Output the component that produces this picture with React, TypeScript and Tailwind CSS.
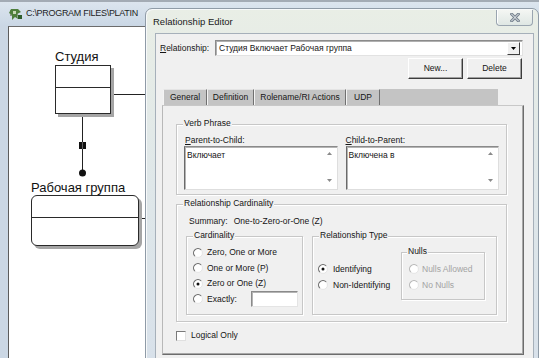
import React from "react";

function Radio({ checked = false, disabled = false }: { checked?: boolean; disabled?: boolean }) {
  return (
    <svg width="10" height="10" viewBox="0 0 12 12" className="shrink-0">
      <circle cx="6" cy="6" r="5.3" fill="#ffffff" />
      <path d="M2.25 9.75 A5.3 5.3 0 0 1 9.75 2.25" fill="none" stroke={disabled ? "#b9b9b9" : "#6f6f6f"} strokeWidth="1.4" />
      <path d="M9.75 2.25 A5.3 5.3 0 0 1 2.25 9.75" fill="none" stroke="#e2e2e2" strokeWidth="1" />
      {checked && <circle cx="6" cy="6" r="1.8" fill="#111111" />}
    </svg>
  );
}

function Group({
  label,
  className,
  labelClass,
  children,
}: {
  label: string;
  className: string;
  labelClass?: string;
  children?: React.ReactNode;
}) {
  return (
    <div className={`relative border border-[#c7c7c7] shadow-[inset_1px_1px_0_#ffffff,1px_1px_0_#ffffff] ${className}`}>
      <span className={`absolute -top-[7px] px-[1px] bg-[#f0f0f0] leading-[11px] whitespace-nowrap ${labelClass ?? "left-[6px]"}`}>
        {label}
      </span>
      {children}
    </div>
  );
}

function UpArrow() {
  return (
    <svg width="5" height="3" viewBox="0 0 5 3">
      <path d="M0 3 L2.5 0 L5 3 Z" fill="#8a8a8a" />
    </svg>
  );
}
function DownArrow() {
  return (
    <svg width="5" height="3" viewBox="0 0 5 3">
      <path d="M0 0 L2.5 3 L5 0 Z" fill="#8a8a8a" />
    </svg>
  );
}

function TextArea({ text }: { text: string }) {
  return (
    <div className="h-[44px] flex bg-white border border-t-[#8a8a8a] border-l-[#6a6a6a] border-r-[#dedede] border-b-[#dedede] shadow-[inset_1px_1px_0_#b4b4b4]">
      <div className="flex-1 pl-[2px] pt-[3px] whitespace-nowrap">{text}</div>
      <div className="w-[13px] flex flex-col items-center justify-between pt-[5px] pb-[7px] mr-[1px]">
        <UpArrow />
        <DownArrow />
      </div>
    </div>
  );
}

function Tab({ w, children }: { w: string; children: React.ReactNode }) {
  return (
    <div className={`${w} h-full flex items-center justify-center border-l border-t border-l-[#f4f4f4] border-t-[#e4e4e4] border-r border-r-[#707070] whitespace-nowrap`}>
      {children}
    </div>
  );
}

function Button({ children }: { children: React.ReactNode }) {
  return (
    <div className="w-[55px] h-[21px] flex items-center justify-center bg-[#f0f0f0] border border-t-[#ffffff] border-l-[#ffffff] border-r-[#3c3c3c] border-b-[#3c3c3c] shadow-[inset_-1px_-1px_0_#a0a0a0]">
      {children}
    </div>
  );
}

function AppIcon() {
  return (
    <svg width="14" height="13" viewBox="0 0 14 13" className="shrink-0">
      <rect x="1" y="2" width="8" height="6" fill="#8c9a8c" />
      <path d="M2 1 L9 1 L12 4 L8 6 L9 11 L6 9 L3 12 L3 7 L0 5 Z" fill="#4f7f3c" />
      <rect x="4" y="3" width="3" height="3" fill="#c8d8b8" />
      <rect x="9" y="7" width="4" height="4" fill="#2f5d2a" />
    </svg>
  );
}

function CloseButton() {
  return (
    <div className="ml-auto mr-[5px] mt-[1px] w-[37px] h-[16px] flex items-center justify-center rounded-b-[4px] border border-t-0 border-[#9aa5b0] bg-gradient-to-b from-[#f4f6f3] to-[#dfe7e4] shadow-[inset_1px_0_0_#ffffff]">
      <svg width="10" height="9" viewBox="0 0 10 9">
        <path d="M1.5 1 L8.5 8 M8.5 1 L1.5 8" stroke="#76828e" strokeWidth="3" strokeLinecap="square" />
        <path d="M1.5 1 L8.5 8 M8.5 1 L1.5 8" stroke="#eef1f3" strokeWidth="1" strokeLinecap="square" />
      </svg>
    </div>
  );
}

export default function App() {
  return (
    <div className="relative w-[539px] h-[358px] overflow-hidden bg-[#cbd7e4] font-['Liberation_Sans',Arial,sans-serif] text-[#151515]">
      {/* background ERwin window */}
      <div className="absolute inset-0 flex flex-col border-t-2 border-[#a3abb4]">
        <div className="h-[24px] flex items-center pl-[9px] gap-[3px] bg-gradient-to-b from-[#dce5ee] to-[#cad7e5]">
          <AppIcon />
          <span className="text-[9px] tracking-[-0.3px] text-[#1e1e1e] whitespace-nowrap">
            C:\PROGRAM FILES\PLATIN
          </span>
        </div>
        <div className="flex-1 flex pl-[8px]">
          <div className="relative w-[139px] bg-white border-l border-t border-r border-l-[#5c5c5c] border-t-[#6c6c6c] border-r-[#9a9a9a]">
            <svg className="absolute inset-0" width="137" height="331">
              <line x1="101" y1="67.5" x2="140" y2="67.5" stroke="#222" strokeWidth="1" />
              <line x1="73.5" y1="86" x2="73.5" y2="146" stroke="#222" strokeWidth="1" />
              <rect x="70" y="115" width="7" height="7" fill="#111" />
              <line x1="73.5" y1="115" x2="73.5" y2="122" stroke="#777" strokeWidth="0.8" />
              <circle cx="73.5" cy="146" r="3.5" fill="#111" />
              <line x1="130" y1="191.5" x2="140" y2="191.5" stroke="#222" strokeWidth="1" />
            </svg>
            <div className="absolute left-[46px] top-[22px] text-[13px] leading-[15px] text-[#111]">Студия</div>
            <div className="absolute left-[46px] top-[38px] w-[56px] h-[49px] flex flex-col border border-[#2a2a2a] bg-white shadow-[3px_3px_0_#a5a5a5]">
              <div className="h-[22px] border-b border-[#2a2a2a]" />
            </div>
            <div className="absolute left-[22px] top-[153px] text-[13px] leading-[15px] text-[#111] whitespace-nowrap">Рабочая группа</div>
            <div className="absolute left-[22px] top-[168px] w-[108px] h-[51px] flex flex-col rounded-[6px] border border-[#2a2a2a] bg-white shadow-[3px_3px_0_#a5a5a5]">
              <div className="h-[22px] border-b border-[#2a2a2a]" />
            </div>
          </div>
        </div>
      </div>

      {/* Relationship Editor dialog */}
      <div className="absolute left-[145px] top-[8px] w-[394px] h-[352px] flex flex-col rounded-t-[7px] border border-[#8f9ba7] bg-gradient-to-b from-[#e9eee6] via-[#dfe7e9] to-[#d8e1ea] shadow-[inset_1px_1px_0_#f7f9fa]">
        <div className="h-[24px] flex items-start shrink-0">
          <span className="pl-[7px] pt-[7px] text-[9.5px] leading-[12px] text-[#1a1a1a] whitespace-nowrap">Relationship Editor</span>
          <CloseButton />
        </div>
        <div className="flex-1 ml-[9px] mr-[4px] flex flex-col border border-[#a6b0ba] bg-[#f0f0f0] text-[8.5px] leading-[11px]">
          {/* relationship row */}
          <div className="mt-[6px] h-[16px] flex items-center pl-[4px] pr-[10px]">
            <span className="w-[55px] shrink-0 whitespace-nowrap">
              <span className="underline">R</span>elationship:
            </span>
            <div className="flex-1 h-[16px] flex items-center bg-white border border-t-[#8a8a8a] border-l-[#8a8a8a] border-r-[#e2e2e2] border-b-[#e2e2e2] shadow-[inset_1px_1px_0_#b0b0b0]">
              <span className="flex-1 pl-[3px] whitespace-nowrap">Студия Включает Рабочая группа</span>
              <div className="w-[13px] h-[13px] mr-[2px] flex items-center justify-center bg-[#f0f0f0] border border-t-[#ffffff] border-l-[#ffffff] border-r-[#404040] border-b-[#404040]">
                <svg width="5" height="3" viewBox="0 0 5 3">
                  <path d="M0 0 L2.5 3 L5 0 Z" fill="#000" />
                </svg>
              </div>
            </div>
          </div>
          {/* buttons */}
          <div className="mt-[2px] flex justify-end gap-[4px] pr-[11px]">
            <Button>New...</Button>
            <Button>Delete</Button>
          </div>
          {/* tabs */}
          <div className="mt-[10px] ml-[7px] h-[16px] w-[335px] flex bg-[#c4c4c4]">
            <Tab w="w-[44px]">General</Tab>
            <Tab w="w-[47px]">Definition</Tab>
            <Tab w="w-[92px]">Rolename/RI Actions</Tab>
            <Tab w="w-[34px]">UDP</Tab>
          </div>
          {/* panel */}
          <div className="ml-[6px] mr-[9px] h-[250px] flex flex-col border-l border-t border-r border-b border-l-[#b8b8b8] border-t-[#c8c8c8] border-r-[#6c6c6c] border-b-[#6c6c6c] shadow-[inset_-1px_-1px_0_#a8a8a8]">
            <Group label="Verb Phrase" className="mt-[18px] ml-[13px] w-[331px] h-[71px] pt-[10px] px-[7px]">
              <div className="grid grid-cols-2 gap-x-[8px]">
                <div className="flex flex-col">
                  <span className="h-[11px] pl-[1px] whitespace-nowrap">
                    <span className="underline">P</span>arent-to-Child:
                  </span>
                  <TextArea text="Включает" />
                </div>
                <div className="flex flex-col">
                  <span className="h-[11px] whitespace-nowrap">
                    <span className="underline">C</span>hild-to-Parent:
                  </span>
                  <TextArea text="Включена в" />
                </div>
              </div>
            </Group>

            <Group label="Relationship Cardinality" className="mt-[9px] ml-[13px] w-[331px] h-[118px] pt-[11px]">
              <div className="h-[11px] pl-[12px] flex whitespace-nowrap">
                <span>Summary:</span>
                <span className="ml-[6px]">One-to-Zero-or-One (Z)</span>
              </div>
              <div className="mt-[9px] pl-[9px] flex gap-[9px]">
                <Group label="Cardinality" className="w-[117px] h-[79px] pt-[8px] pl-[6px]">
                  <div className="h-[15.5px] flex items-center gap-[4px]">
                    <Radio />
                    <span className="whitespace-nowrap">Zero, One or More</span>
                  </div>
                  <div className="h-[15.5px] flex items-center gap-[4px]">
                    <Radio />
                    <span className="whitespace-nowrap">One or More (P)</span>
                  </div>
                  <div className="h-[15.5px] flex items-center gap-[4px]">
                    <Radio checked />
                    <span className="whitespace-nowrap">Zero or One (Z)</span>
                  </div>
                  <div className="h-[15.5px] flex items-center gap-[4px]">
                    <Radio />
                    <span className="w-[40px] whitespace-nowrap">Exactly:</span>
                    <div className="w-[47px] h-[16px] shrink-0 bg-white border border-t-[#8a8a8a] border-l-[#8a8a8a] border-r-[#e4e4e4] border-b-[#e4e4e4] shadow-[inset_1px_1px_0_#b4b4b4]" />
                  </div>
                </Group>
                <Group label="Relationship Type" className="w-[185px] h-[79px] flex">
                  <div className="w-[88px] pt-[24px] pl-[5px]">
                    <div className="h-[16px] flex items-center gap-[5px]">
                      <Radio checked />
                      <span className="whitespace-nowrap">Identifying</span>
                    </div>
                    <div className="h-[16px] flex items-center gap-[5px]">
                      <Radio />
                      <span className="whitespace-nowrap">Non-Identifying</span>
                    </div>
                  </div>
                  <Group label="Nulls" labelClass="left-[5px] text-[#151515]" className="mt-[15px] w-[84px] h-[48px] pt-[8px] pl-[7px] text-[#a3a3a3]">
                    <div className="h-[16px] flex items-center gap-[3px]">
                      <Radio disabled />
                      <span className="whitespace-nowrap">Nulls Allowed</span>
                    </div>
                    <div className="h-[16px] flex items-center gap-[3px]">
                      <Radio disabled />
                      <span className="whitespace-nowrap">No Nulls</span>
                    </div>
                  </Group>
                </Group>
              </div>
            </Group>

            <div className="mt-[8px] ml-[13px] h-[11px] flex items-center gap-[5px]">
              <div className="w-[10px] h-[10px] bg-white border border-t-[#7a7a7a] border-l-[#7a7a7a] border-r-[#e0e0e0] border-b-[#e0e0e0]" />
              <span className="whitespace-nowrap">Logical Only</span>
            </div>
          </div>
        </div>
      </div>
    </div>
  );
}
